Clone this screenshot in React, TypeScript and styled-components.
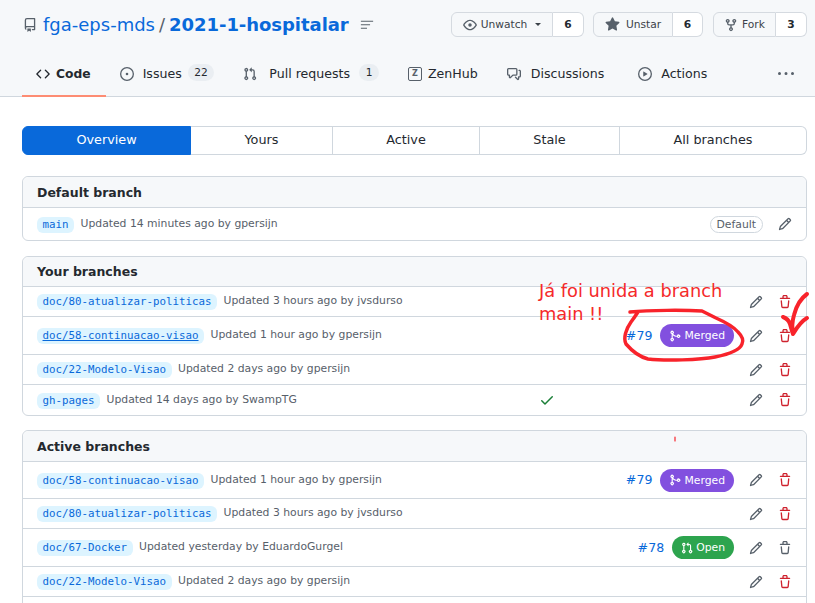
import React, { FC } from 'react'
import styled, { createGlobalStyle } from 'styled-components'

const GlobalStyle = createGlobalStyle`
  html, body {
    margin: 0;
    padding: 0;
    height: 603px;
    overflow: hidden;
    background: #fff;
    font-family: "DejaVu Sans", sans-serif;
    color: #24292f;
  }
`

const paths = {
  repo: 'M2 2.5A2.5 2.5 0 014.5 0h8.75a.75.75 0 01.75.75v12.5a.75.75 0 01-.75.75h-2.5a.75.75 0 110-1.5h1.75v-2h-8a1 1 0 00-.714 1.7.75.75 0 01-1.072 1.05A2.495 2.495 0 012 11.5v-9zm10.5-1V9h-8c-.356 0-.694.074-1 .208V2.5a1 1 0 011-1h8zM5 12.25v3.25a.25.25 0 00.4.2l1.45-1.087a.25.25 0 01.3 0L8.6 15.7a.25.25 0 00.4-.2v-3.25a.25.25 0 00-.25-.25h-3.5a.25.25 0 00-.25.25z',
  code: 'M4.72 3.22a.75.75 0 011.06 1.06L2.06 8l3.72 3.72a.75.75 0 11-1.06 1.06L.47 8.53a.75.75 0 010-1.06l4.25-4.25zm6.56 0a.75.75 0 10-1.06 1.06L13.94 8l-3.72 3.72a.75.75 0 101.06 1.06l4.25-4.25a.75.75 0 000-1.06l-4.25-4.25z',
  issue: 'M8 9.5a1.5 1.5 0 100-3 1.5 1.5 0 000 3zM8 0a8 8 0 100 16A8 8 0 008 0zM1.5 8a6.5 6.5 0 1113 0 6.5 6.5 0 01-13 0z',
  pull: 'M7.177 3.073L9.573.677A.25.25 0 0110 .854v4.792a.25.25 0 01-.427.177L7.177 3.427a.25.25 0 010-.354zM3.75 2.5a.75.75 0 100 1.5.75.75 0 000-1.5zm-2.25.75a2.25 2.25 0 113 2.122v5.256a2.251 2.251 0 11-1.5 0V5.372A2.25 2.25 0 011.5 3.25zM11 2.5h-1V4h1a1 1 0 011 1v5.628a2.251 2.251 0 101.5 0V5A2.5 2.5 0 0011 2.5zm1 10.25a.75.75 0 111.5 0 .75.75 0 01-1.5 0zM3.75 12a.75.75 0 100 1.5.75.75 0 000-1.5z',
  discussion: 'M1.5 2.75a.25.25 0 01.25-.25h8.5a.25.25 0 01.25.25v5.5a.25.25 0 01-.25.25h-3.5a.75.75 0 00-.53.22L3.5 11.44V9.25a.75.75 0 00-.75-.75h-1a.25.25 0 01-.25-.25v-5.5zM1.75 1A1.75 1.75 0 000 2.75v5.5C0 9.216.784 10 1.75 10H2v1.543a1.457 1.457 0 002.487 1.03L7.061 10h3.189A1.75 1.75 0 0012 8.25v-5.5A1.75 1.75 0 0010.25 1h-8.5zM14.5 4.75a.25.25 0 00-.25-.25h-.5a.75.75 0 110-1.5h.5c.966 0 1.75.784 1.75 1.75v5.5A1.75 1.75 0 0114.25 12H14v1.543a1.457 1.457 0 01-2.487 1.03L9.22 12.28a.75.75 0 111.06-1.06l2.22 2.22v-2.19a.75.75 0 01.75-.75h1a.25.25 0 00.25-.25v-5.5z',
  play: 'M1.5 8a6.5 6.5 0 1113 0 6.5 6.5 0 01-13 0zM8 0a8 8 0 100 16A8 8 0 008 0zM6.379 5.227A.25.25 0 006 5.442v5.117a.25.25 0 00.379.214l4.264-2.559a.25.25 0 000-.428L6.379 5.227z',
  eye: 'M1.679 7.932c.412-.621 1.242-1.75 2.366-2.717C5.175 4.242 6.527 3.5 8 3.5c1.473 0 2.824.742 3.955 1.715 1.124.967 1.954 2.096 2.366 2.717a.119.119 0 010 .136c-.412.621-1.242 1.75-2.366 2.717C10.825 11.758 9.473 12.5 8 12.5c-1.473 0-2.824-.742-3.955-1.715C2.921 9.818 2.091 8.69 1.679 8.068a.119.119 0 010-.136zM8 2c-1.981 0-3.67.992-4.933 2.078C1.797 5.169.88 6.423.43 7.1a1.619 1.619 0 000 1.798c.45.678 1.367 1.932 2.637 3.024C4.329 13.008 6.019 14 8 14c1.981 0 3.67-.992 4.933-2.078 1.27-1.091 2.187-2.345 2.637-3.023a1.619 1.619 0 000-1.798c-.45-.678-1.367-1.932-2.637-3.023C11.671 2.992 9.981 2 8 2zm0 8a2 2 0 100-4 2 2 0 000 4z',
  star: 'M8 .25a.75.75 0 01.673.418l1.882 3.815 4.21.612a.75.75 0 01.416 1.279l-3.046 2.97.719 4.192a.75.75 0 01-1.088.791L8 12.347l-3.766 1.98a.75.75 0 01-1.088-.79l.72-4.194L.818 6.374a.75.75 0 01.416-1.28l4.21-.611L7.327.668A.75.75 0 018 .25z',
  fork: 'M5 3.25a.75.75 0 11-1.5 0 .75.75 0 011.5 0zm0 2.122a2.25 2.25 0 10-1.5 0v.878A2.25 2.25 0 005.75 8.5h1.5v2.128a2.251 2.251 0 101.5 0V8.5h1.5a2.25 2.25 0 002.25-2.25v-.878a2.25 2.25 0 10-1.5 0v.878a.75.75 0 01-.75.75h-4.5A.75.75 0 015 6.25v-.878zm3.75 7.378a.75.75 0 11-1.5 0 .75.75 0 011.5 0zm3-8.75a.75.75 0 100-1.5.75.75 0 000 1.5z',
  kebab: 'M8 9a1.5 1.5 0 100-3 1.5 1.5 0 000 3zM1.5 9a1.5 1.5 0 100-3 1.5 1.5 0 000 3zm13 0a1.5 1.5 0 100-3 1.5 1.5 0 000 3z',
  pencil: 'M11.013 1.427a1.75 1.75 0 012.474 0l1.086 1.086a1.75 1.75 0 010 2.474l-8.61 8.61c-.21.21-.47.364-.756.445l-3.251.93a.75.75 0 01-.927-.928l.929-3.25a1.75 1.75 0 01.445-.758l8.61-8.61zm1.414 1.06a.25.25 0 00-.354 0L10.811 3.75l1.439 1.44 1.263-1.263a.25.25 0 000-.354l-1.086-1.086zM11.189 6.25L9.75 4.81l-6.286 6.287a.25.25 0 00-.064.108l-.558 1.953 1.953-.558a.249.249 0 00.108-.064l6.286-6.286z',
  trash: 'M6.5 1.75a.25.25 0 01.25-.25h2.5a.25.25 0 01.25.25V3h-3V1.75zm4.5 0V3h2.25a.75.75 0 010 1.5H2.75a.75.75 0 010-1.5H5V1.75C5 .784 5.784 0 6.75 0h2.5C10.216 0 11 .784 11 1.75zM4.496 6.675a.75.75 0 10-1.492.15l.66 6.6A1.75 1.75 0 005.405 15h5.19c.9 0 1.652-.681 1.741-1.576l.66-6.6a.75.75 0 00-1.492-.149l-.66 6.6a.25.25 0 01-.249.225h-5.19a.25.25 0 01-.249-.225l-.66-6.6z',
  merge: 'M5.45 5.154A4.25 4.25 0 009.25 7.5h1.378a2.251 2.251 0 110 1.5H9.25A5.734 5.734 0 015 7.123v3.505a2.25 2.25 0 11-1.5 0V5.372a2.25 2.25 0 111.95-.218zM4.25 13.5a.75.75 0 100-1.5.75.75 0 000 1.5zm8.5-4.5a.75.75 0 100-1.5.75.75 0 000 1.5zM5 3.25a.75.75 0 10-1.5 0 .75.75 0 001.5 0z',
  check: 'M13.78 4.22a.75.75 0 010 1.06l-7.25 7.25a.75.75 0 01-1.06 0L2.22 9.28a.75.75 0 011.06-1.06L6 10.94l6.72-6.72a.75.75 0 011.06 0z',
  lines: 'M1 3h14v1.4H1zM1 7h10.5v1.4H1zM1 11h7v1.4H1z',
}

const Icon: FC<{ name: keyof typeof paths; size?: number; color?: string }> = ({ name, size = 14, color = '#57606a' }) => (
  <svg width={size} height={size} viewBox="0 0 16 16" fill={color} style={{ flexShrink: 0, display: 'block' }}>
    <path fillRule="evenodd" d={paths[name]} />
  </svg>
)

const Page = styled.div`
  position: relative;
  width: 815px;
  height: 603px;
  overflow: hidden;
`

const Header = styled.header`
  height: 96px;
  background: #f6f8fa;
  border-bottom: 1px solid #d0d7de;
  display: flex;
  flex-direction: column;
`

const TopRow = styled.div`
  display: flex;
  align-items: flex-start;
  height: 52px;
  padding: 12px 8px 0 22px;
  box-sizing: border-box;
`

const Title = styled.div`
  display: flex;
  align-items: center;
  height: 25px;
  font-size: 18px;
`

const Owner = styled.a`
  color: #0969da;
  margin-left: 6px;
`

const RepoIcon = styled.span`
  margin-left: 1px;
`

const Slash = styled.span`
  color: #57606a;
  margin: 0 4px;
`

const RepoName = styled.a`
  color: #0969da;
  font-weight: 700;
  letter-spacing: -0.05px;
`

const ListButton = styled.span`
  margin-left: 11px;
  display: flex;
`

const Actions = styled.div`
  margin-left: auto;
  display: flex;
`

const ButtonGroup = styled.div<{ $gap?: number }>`
  display: flex;
  height: 25px;
  margin-left: ${(p) => p.$gap ?? 9}px;
  font-size: 10.67px;
`

const ActionButton = styled.button<{ $width: number; $gap: number }>`
  width: ${(p) => p.$width}px;
  display: flex;
  align-items: center;
  justify-content: center;
  gap: ${(p) => p.$gap}px;
  padding: 0;
  background: #f6f8fa;
  border: 1px solid #d5dae0;
  border-radius: 6px 0 0 6px;
  color: #3b4249;
  font: inherit;
`

const Counter = styled.span<{ $width: number }>`
  width: ${(p) => p.$width}px;
  display: flex;
  align-items: center;
  justify-content: center;
  background: #fff;
  border: 1px solid #d5dae0;
  border-left: 0;
  border-radius: 0 6px 6px 0;
  font-weight: 700;
  box-sizing: border-box;
`

const Caret = styled.span`
  width: 0;
  height: 0;
  margin-left: 4px;
  border: 3.5px solid transparent;
  border-top-color: #3b4249;
  border-bottom: 0;
`

const Nav = styled.nav`
  display: flex;
  height: 44px;
  padding-left: 22px;
  font-size: 12.6px;
`

const NavItem = styled.a<{ $active?: boolean; $gap?: number; $extra?: number }>`
  display: flex;
  align-items: center;
  gap: ${(p) => p.$gap ?? 9}px;
  padding: 0 15px 0 14px;
  margin-right: ${(p) => p.$extra ?? 0}px;
  box-sizing: border-box;
  height: 45px;
  color: #24292f;
  font-size: ${(p) => (p.$active ? '12.3px' : 'inherit')};
  font-weight: ${(p) => (p.$active ? 700 : 400)};
  border-bottom: 2px solid ${(p) => (p.$active ? '#fd8c73' : 'transparent')};
`

const NavBadge = styled.span`
  font-size: 10.67px;
  line-height: 17px;
  padding: 0 6.5px;
  border-radius: 9px;
  background: #eaeef2;
  margin: -2px 0 0 -3px;
`

const ZenIcon = styled.span`
  width: 12px;
  height: 12px;
  border: 1px solid #57606a;
  border-radius: 2px;
  display: flex;
  align-items: center;
  justify-content: center;
  font-size: 8px;
  font-weight: 700;
  color: #57606a;
`

const Kebab = styled.span`
  margin-left: auto;
  margin-right: 21px;
  align-self: center;
`

const Main = styled.main`
  padding: 29px 8px 0 22px;
`

const Tabs = styled.div`
  display: grid;
  grid-template-columns: 169px 142px 147px 140px 187px;
  height: 29px;
  margin-bottom: 21px;
`

const Tab = styled.a<{ $active?: boolean }>`
  display: flex;
  align-items: center;
  justify-content: center;
  font-size: 12.8px;
  padding-bottom: 2px;
  box-sizing: border-box;
  border: 1px solid ${(p) => (p.$active ? '#0969da' : '#d0d7de')};
  border-left-width: ${(p) => (p.$active ? 1 : 0)}px;
  color: ${(p) => (p.$active ? '#fff' : '#24292f')};
  background: ${(p) => (p.$active ? '#0969da' : '#fff')};
  &:first-child {
    border-radius: 6px 0 0 6px;
  }
  &:last-child {
    border-radius: 0 6px 6px 0;
  }
`

const Box = styled.section<{ $gap: number }>`
  border: 1px solid #d0d7de;
  border-radius: 6px;
  margin-bottom: ${(p) => p.$gap}px;
`

const BoxHeader = styled.h3<{ $height: number }>`
  margin: 0;
  height: ${(p) => p.$height}px;
  box-sizing: border-box;
  padding: 0 14px;
  display: flex;
  align-items: center;
  font-size: 12.5px;
  font-weight: 700;
  background: #f6f8fa;
  border-radius: 6px 6px 0 0;
`

const Row = styled.div<{ $height: number }>`
  display: grid;
  grid-template-columns: 1fr 16px 186px 58px 7px;
  align-items: center;
  box-sizing: border-box;
  height: ${(p) => p.$height}px;
  padding-left: 14px;
  border-top: 1px solid #d0d7de;
`

const Info = styled.div`
  display: flex;
  align-items: center;
  gap: 6.5px;
  min-width: 0;
  white-space: nowrap;
`

const BranchName = styled.a<{ $underline?: boolean }>`
  font-family: "DejaVu Sans Mono", monospace;
  font-size: 10.8px;
  line-height: 16px;
  padding: 0 5.5px;
  margin-top: 1px;
  color: #0969da;
  background: #ddf4ff;
  border-radius: 6px;
  text-decoration: ${(p) => (p.$underline ? 'underline' : 'none')};
`

const Updated = styled.span`
  font-size: 10.8px;
  color: #57606a;
  margin-top: -2px;
`

const PrCell = styled.div`
  display: flex;
  align-items: center;
  justify-content: flex-end;
  gap: 8px;
  padding-right: 7px;
`

const PrNumber = styled.a`
  font-size: 12.6px;
  color: #0969da;
  margin-top: -1px;
`

const StatusPill = styled.span<{ $color: string }>`
  display: flex;
  align-items: center;
  gap: 3px;
  height: 23px;
  padding: 0 9px;
  border-radius: 12px;
  font-size: 10.8px;
  color: #fff;
  background: ${(p) => p.$color};
`

const RowActions = styled.div`
  display: flex;
  justify-content: space-between;
  padding: 0 7px 0 8px;
`

const DefaultLabel = styled.span`
  font-size: 10.8px;
  line-height: 15px;
  padding: 0 6px;
  color: #57606a;
  border: 1px solid #d0d7de;
  border-radius: 9px;
`

const DefaultActions = styled.div`
  grid-column: 3 / span 2;
  display: flex;
  align-items: center;
  justify-content: flex-end;
  gap: 15px;
  padding-right: 7px;
`

const Note = styled.div`
  position: absolute;
  left: 539px;
  top: 279px;
  width: 212px;
  font-size: 17.8px;
  line-height: 23px;
  color: #f52a2a;
`

const Scribble = styled.svg`
  position: absolute;
  left: 0;
  top: 0;
  pointer-events: none;
`

type Branch = {
  name: string
  text: string
  height: number
  check?: boolean
  underline?: boolean
  pr?: { number: string; state: 'merged' | 'open' }
  trashMuted?: boolean
}

const yours: Branch[] = [
  { name: 'doc/80-atualizar-politicas', text: 'Updated 3 hours ago by jvsdurso', height: 30 },
  { name: 'doc/58-continuacao-visao', text: 'Updated 1 hour ago by gpersijn', height: 38, underline: true, pr: { number: '#79', state: 'merged' } },
  { name: 'doc/22-Modelo-Visao', text: 'Updated 2 days ago by gpersijn', height: 30 },
  { name: 'gh-pages', text: 'Updated 14 days ago by SwampTG', height: 31, check: true },
]

const active: Branch[] = [
  { name: 'doc/58-continuacao-visao', text: 'Updated 1 hour ago by gpersijn', height: 37, pr: { number: '#79', state: 'merged' } },
  { name: 'doc/80-atualizar-politicas', text: 'Updated 3 hours ago by jvsdurso', height: 30 },
  { name: 'doc/67-Docker', text: 'Updated yesterday by EduardoGurgel', height: 38, pr: { number: '#78', state: 'open' }, trashMuted: true },
  { name: 'doc/22-Modelo-Visao', text: 'Updated 2 days ago by gpersijn', height: 30 },
]

const BranchRow: FC<{ branch: Branch }> = ({ branch }) => (
  <Row $height={branch.height}>
    <Info>
      <BranchName $underline={branch.underline}>{branch.name}</BranchName>
      <Updated>{branch.text}</Updated>
    </Info>
    <div>{branch.check && <Icon name="check" color="#1a7f37" size={16} />}</div>
    <PrCell>
      {branch.pr && (
        <>
          <PrNumber>{branch.pr.number}</PrNumber>
          <StatusPill $color={branch.pr.state === 'merged' ? '#8250df' : '#2da44e'}>
            <Icon name={branch.pr.state === 'merged' ? 'merge' : 'pull'} size={12} color="#fff" />
            {branch.pr.state === 'merged' ? 'Merged' : 'Open'}
          </StatusPill>
        </>
      )}
    </PrCell>
    <RowActions>
      <Icon name="pencil" />
      <Icon name="trash" color={branch.trashMuted ? '#57606a' : '#cf222e'} />
    </RowActions>
  </Row>
)

const App: FC = () => {
  return (
    <Page>
      <GlobalStyle />
      <Header>
        <TopRow>
          <Title>
            <RepoIcon><Icon name="repo" /></RepoIcon>
            <Owner>fga-eps-mds</Owner>
            <Slash>/</Slash>
            <RepoName>2021-1-hospitalar</RepoName>
            <ListButton><Icon name="lines" /></ListButton>
          </Title>
          <Actions>
            <ButtonGroup>
              <ActionButton $width={102} $gap={4}><Icon name="eye" />Unwatch<Caret /></ActionButton>
              <Counter $width={31}>6</Counter>
            </ButtonGroup>
            <ButtonGroup>
              <ActionButton $width={80} $gap={6}><Icon name="star" size={15} />Unstar</ActionButton>
              <Counter $width={30}>6</Counter>
            </ButtonGroup>
            <ButtonGroup $gap={10}>
              <ActionButton $width={63} $gap={4}><Icon name="fork" />Fork</ActionButton>
              <Counter $width={31}>3</Counter>
            </ButtonGroup>
          </Actions>
        </TopRow>
        <Nav>
          <NavItem $active $gap={6}><Icon name="code" color="#24292f" />Code</NavItem>
          <NavItem><Icon name="issue" />Issues<NavBadge>22</NavBadge></NavItem>
          <NavItem $gap={12}><Icon name="pull" />Pull requests<NavBadge>1</NavBadge></NavItem>
          <NavItem $gap={6}><ZenIcon>Z</ZenIcon>ZenHub</NavItem>
          <NavItem $gap={10} $extra={5}><Icon name="discussion" />Discussions</NavItem>
          <NavItem><Icon name="play" />Actions</NavItem>
          <Kebab><Icon name="kebab" size={16} /></Kebab>
        </Nav>
      </Header>
      <Main>
        <Tabs>
          <Tab $active>Overview</Tab>
          <Tab>Yours</Tab>
          <Tab>Active</Tab>
          <Tab>Stale</Tab>
          <Tab>All branches</Tab>
        </Tabs>
        <Box $gap={15}>
          <BoxHeader $height={30}>Default branch</BoxHeader>
          <Row $height={33}>
            <Info>
              <BranchName>main</BranchName>
              <Updated>Updated 14 minutes ago by gpersijn</Updated>
            </Info>
            <div />
            <DefaultActions>
              <DefaultLabel>Default</DefaultLabel>
              <Icon name="pencil" />
            </DefaultActions>
          </Row>
        </Box>
        <Box $gap={14}>
          <BoxHeader $height={29}>Your branches</BoxHeader>
          {yours.map((b) => <BranchRow key={b.name} branch={b} />)}
        </Box>
        <Box $gap={14}>
          <BoxHeader $height={30}>Active branches</BoxHeader>
          {active.map((b) => <BranchRow key={b.name} branch={b} />)}
          <Row $height={30} />
        </Box>
      </Main>
      <Note>Já foi unida a branch main !!</Note>
      <Scribble width={815} height={603} fill="none" stroke="#f8232b" strokeLinecap="round" strokeLinejoin="round">
        <path strokeWidth={3.5} d="M630 312 C650 310 685 310 702 311 C708 314 712 316 716 318 C725 322 733 326 738 332 C742 336 744 340 742 344 C740 350 730 354 715 357 C700 360 665 361 648 359 C640 357 632 351 626 344 C623 338 626 329 631 322 C634 318 636 315 638 312" />
        <path strokeWidth={4} d="M807 294 C800 299 796 307 794 315 C792 322 792 329 793 334 M783 317 C786 318 789 321 790 324 C791 328 792 331 793 334 C796 329 800 322 807 318" />
        <path strokeWidth={1.2} d="M675 437 V441" />
      </Scribble>
    </Page>
  )
}

export default App
